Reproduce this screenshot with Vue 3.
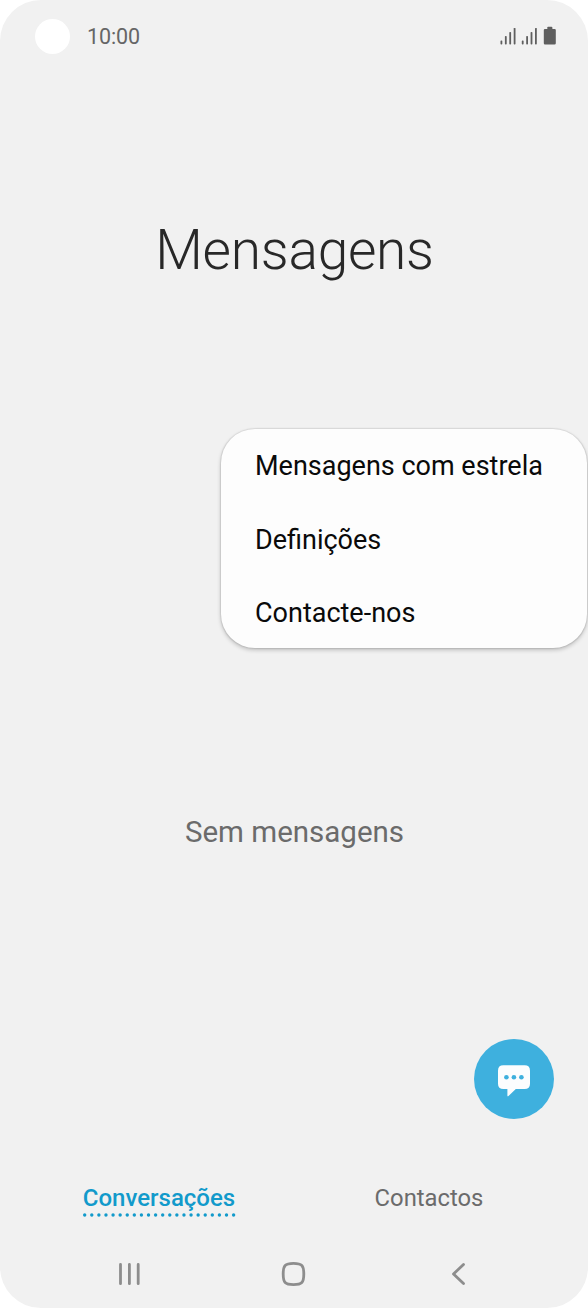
<script setup>
const menu = ['Mensagens com estrela', 'Definições', 'Contacte-nos']
const bars = [[0, 4], [4.4, 8.4], [8.8, 12.3], [13.2, 16.5]]
const dots = Array.from({ length: 22 }, (_, i) => 1.7 + i * 7.09)
</script>

<template>
  <div class="phone">
    <header class="status">
      <span class="camera"></span>
      <span class="time">10:00</span>
      <svg class="indicators" width="58" height="20" viewBox="0 0 58 20" fill="#5f5f5f">
        <g v-for="x in [1.4, 22.7]" :key="x">
          <rect v-for="b in bars" :key="b[0]" :x="x + b[0] - 0.9" :y="18.4 - b[1]" width="1.8" :height="b[1]" rx=".7" />
        </g>
        <path d="M47.2 1.7q0-1 1-1h3.2q1 0 1 1v1.2h2.2q1.2 0 1.2 1.2v13.1q0 1.2-1.2 1.2h-9.6q-1.2 0-1.2-1.2v-13.1q0-1.2 1.2-1.2h2.4z" />
      </svg>
    </header>
    <h1 class="title">Mensagens</h1>
    <main class="content">
      <p class="empty">Sem mensagens</p>
      <div class="actions">
        <button class="fab">
          <svg width="80" height="80" viewBox="0 0 80 80">
            <path fill="#fcfdfe" d="M29.4 26.3h21.2q5.4 0 5.4 5.4v13q0 5.4-5.4 5.4H41.8l-7.3 6.9q-1.1.9-1.1-.6v-6.3h-4q-5.4 0-5.4-5.4v-13q0-5.4 5.4-5.4z" />
            <circle v-for="x in [32.4, 39.9, 47.4]" :key="x" :cx="x" cy="38.3" r="2.3" fill="#3eb0de" />
          </svg>
        </button>
      </div>
    </main>
    <nav class="tabs">
      <div class="tab active">
        <span>Conversações</span>
        <svg class="dots" width="153" height="4" viewBox="0 0 153 4" fill="#129acb">
          <circle v-for="x in dots" :key="x" :cx="x" cy="2" r="1.7" />
        </svg>
      </div>
      <div class="tab contacts"><span>Contactos</span></div>
    </nav>
    <footer class="navbar">
      <svg width="588" height="68" viewBox="0 0 588 68" fill="none" stroke="#8d8d8d" stroke-width="2.8" stroke-linecap="round" stroke-linejoin="round">
        <path d="M120.5 24.4v19.3M129.4 24.4v19.3M138.2 24.4v19.3" />
        <path d="M293.5 23.4c8.5 0 10.3 2 10.3 10.6s-1.8 10.6-10.3 10.6s-10.3-2-10.3-10.6s1.8-10.6 10.3-10.6z" />
        <path d="M463.5 24.4l-10 9.6l10 9.6" />
      </svg>
    </footer>
    <ul class="menu">
      <li v-for="item in menu" :key="item">{{ item }}</li>
    </ul>
  </div>
</template>

<style>
body { margin: 0; background: #fff; }
</style>

<style scoped>
.phone {
  position: relative;
  display: flex;
  flex-direction: column;
  width: 588px;
  height: 1308px;
  overflow: hidden;
  border-radius: 41px;
  background: #f1f1f1;
  font-family: Roboto, "Liberation Sans", sans-serif;
}
.status { display: flex; align-items: center; height: 72px; padding: 0 30px 0 35px; }
.camera { width: 35px; height: 35px; border-radius: 50%; background: #fff; }
.time { margin: 2px 0 0 17px; font-size: 21.5px; line-height: 26px; letter-spacing: -.1px; color: #666; }
.indicators { margin-left: auto; }
.title {
  margin: 143px 0 0;
  padding-left: 1px;
  height: 69px;
  line-height: 70px;
  font-size: 55px;
  font-weight: 300;
  letter-spacing: -.25px;
  text-align: center;
  color: #282828;
}
.content { display: flex; flex-direction: column; flex: 1; }
.empty { margin: 528px 0 0; padding-left: 1px; line-height: 40px; font-size: 29.5px; text-align: center; color: #6b6b6b; }
.actions { display: flex; justify-content: flex-end; margin-top: 187px; padding-right: 34px; }
.fab { width: 80px; height: 80px; padding: 0; border: 0; border-radius: 50%; background: #3eb0de; }
.fab svg { display: block; }
.tabs { display: flex; height: 60px; padding: 0 24px; }
.tab { display: flex; flex-direction: column; align-items: center; flex: 1; padding-top: 2px; font-size: 23.8px; line-height: 32px; color: #6b6b6b; }
.active { font-size: 24px; font-weight: 500; color: #129acb; }
.dots { margin-top: -1px; }
.navbar { height: 68px; }
.navbar svg { display: block; }
.menu {
  position: absolute;
  left: 221px;
  top: 428.5px;
  box-sizing: border-box;
  width: 366px;
  height: 219px;
  margin: 0;
  padding: .5px 0 0 34px;
  list-style: none;
  border-radius: 34px;
  background: #fdfdfd;
  box-shadow: 0 0 1px 1px rgba(0, 0, 0, .08), 0 2px 4px rgba(0, 0, 0, .22);
}
.menu li { height: 73.5px; line-height: 75px; font-size: 27px; color: #0a0a0a; white-space: nowrap; }
</style>
